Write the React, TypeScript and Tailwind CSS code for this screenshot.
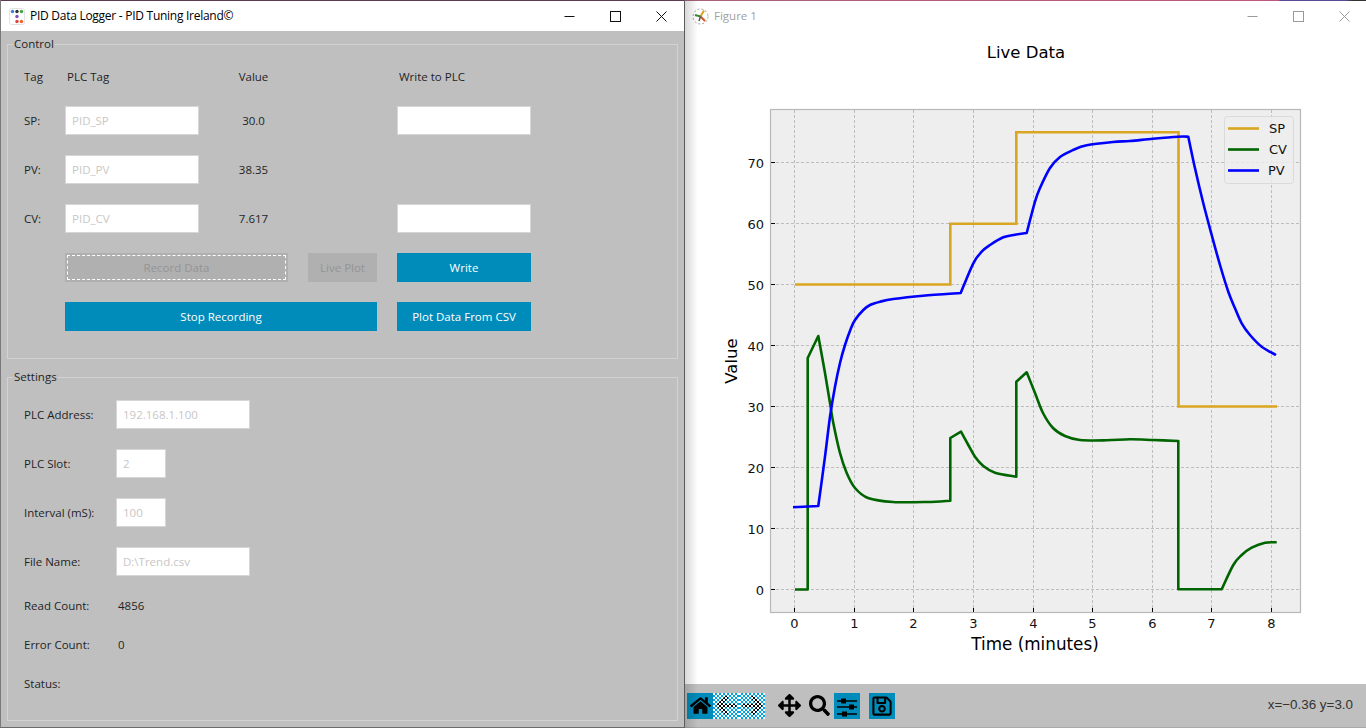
import React from 'react';
import { FaArrowLeft, FaArrowRight, FaArrowsAlt, FaHome, FaRegSave, FaSearch } from 'react-icons/fa';

type Pt = [number, number];

// Plot geometry, in page pixels (the svg viewBox uses the same numbers)
const xTicks = [0, 1, 2, 3, 4, 5, 6, 7, 8];
const yTicks = [0, 10, 20, 30, 40, 50, 60, 70];
const tx = (t: number) => Math.floor(794.6 + 59.6 * t) + 0.5;
const ty = (v: number) => Math.floor(589.3 - 6.09 * v) + 0.5;

const spPath = 'M795 284.5H950.3V223.7H1016.3V132.3H1178.5V406.5H1277';

const cvSections: Pt[][] = [
  [[795, 589.5], [807.7, 589.5], [807.7, 358], [818.3, 336]],
  [[818.3, 336], [825, 373], [830, 403], [833.3, 423], [840, 453], [846.7, 473], [855, 488], [868, 498], [893, 502], [927, 502], [950.3, 500.7]],
  [[950.3, 500.7], [950.3, 438], [961, 431.7]],
  [[961, 431.7], [968.3, 445], [975, 456.7], [983.3, 466], [995, 472.7], [1016.3, 476.7]],
  [[1016.3, 476.7], [1016.3, 381.7], [1026.7, 372.3]],
  [[1026.7, 372.3], [1035, 393], [1043, 413], [1053, 428], [1065, 436], [1080, 440], [1106.7, 440.3], [1130, 439.3], [1153, 440], [1178.3, 441]],
  [[1178.3, 441], [1178.3, 589.3], [1221.7, 589.3]],
  [[1221.7, 589.3], [1233.3, 565], [1241.7, 555], [1251.7, 547.7], [1265, 542.7], [1276.7, 542.3]],
];

const pvSections: Pt[][] = [
  [[793, 507.3], [818.3, 506]],
  [[818.3, 506], [825, 456.7], [830, 416.7], [835, 386.7], [840, 363], [845, 345], [850.7, 329], [855, 320], [863.3, 310], [870, 305], [880, 301.7], [893.3, 299], [923, 295.7], [960.7, 293]],
  [[960.7, 293], [973.3, 263.3], [981.7, 251.7], [990, 245], [1003.3, 237.3], [1015, 234.7], [1026.7, 233]],
  [[1026.7, 233], [1035, 201.7], [1040, 188], [1050, 168], [1060, 157], [1073, 150], [1086.7, 145.3], [1113, 142], [1130, 141], [1153, 138.7], [1178, 136.7], [1188.3, 136.7]],
  [[1188.3, 136.7], [1195, 168.3], [1203.3, 203.3], [1211.7, 235], [1220, 265], [1228.3, 291.7], [1235, 308.3], [1241.7, 323.3], [1250, 335], [1261.7, 346.7], [1276, 355]],
];

// Catmull-Rom through the samples; straight when a section has just two or three corner points
function toPath(sections: Pt[][]) {
  let d = '';
  sections.forEach((pts, si) => {
    if (si === 0) d += `M${pts[0][0]} ${pts[0][1]}`;
    if (pts.length <= 4) {
      pts.slice(1).forEach((p) => (d += `L${p[0]} ${p[1]}`));
      return;
    }
    for (let i = 0; i < pts.length - 1; i++) {
      const p0 = pts[Math.max(i - 1, 0)];
      const p1 = pts[i];
      const p2 = pts[i + 1];
      const p3 = pts[Math.min(i + 2, pts.length - 1)];
      const c1x = p1[0] + (p2[0] - p0[0]) / 6;
      const c1y = p1[1] + (p2[1] - p0[1]) / 6;
      const c2x = p2[0] - (p3[0] - p1[0]) / 6;
      const c2y = p2[1] - (p3[1] - p1[1]) / 6;
      d += `C${c1x} ${c1y} ${c2x} ${c2y} ${p2[0]} ${p2[1]}`;
    }
  });
  return d;
}

// white checker cells, 2px each, for a 26px square
const ditherPath = (() => {
  let d = '';
  for (let y = 0; y < 26; y += 2) {
    for (let x = 0; x < 26; x += 2) {
      if ((x + y) % 4 === 0) d += `M${x} ${y}h2v2h-2z`;
    }
  }
  return d;
})();

const WinControls: React.FC<{ dim?: boolean }> = ({ dim }) => {
  const stroke = dim ? '#9a9a9a' : '#111111';
  return (
    <div className="ml-auto flex h-full items-center">
      <div className="flex h-full w-[46px] items-center justify-center">
        <svg width="11" height="11" viewBox="0 0 11 11"><path d="M0.5 5.5H10.5" stroke={stroke} fill="none" /></svg>
      </div>
      <div className="flex h-full w-[46px] items-center justify-center">
        <svg width="11" height="11" viewBox="0 0 11 11"><rect x="0.5" y="0.5" width="10" height="10" stroke={stroke} fill="none" /></svg>
      </div>
      <div className="flex h-full w-[46px] items-center justify-center">
        <svg width="11" height="11" viewBox="0 0 11 11"><path d="M0.5 0.5L10.5 10.5M10.5 0.5L0.5 10.5" stroke={stroke} fill="none" /></svg>
      </div>
    </div>
  );
};

const Field: React.FC<{ value?: string; w?: string }> = ({ value = '', w = 'w-[134px]' }) => (
  <input
    readOnly
    value={value}
    className={`${w} h-[29px] shrink-0 border border-[#d6d6d6] bg-white px-[6px] text-[#c9c6c6] outline-none`}
  />
);

const Row: React.FC<{ children: React.ReactNode }> = ({ children }) => (
  <div className="flex h-[29px] items-center">{children}</div>
);

const ToolBtn: React.FC<{ children: React.ReactNode; className?: string }> = ({ children, className = '' }) => (
  <div className={`relative flex h-[26px] w-[26px] shrink-0 items-center justify-center text-black ${className}`}>{children}</div>
);

// white checker over a disabled toolbar button
const Dither: React.FC = () => (
  <svg className="absolute inset-0" width="26" height="26" viewBox="0 0 26 26" shapeRendering="crispEdges">
    <path d={ditherPath} fill="#ffffff" />
  </svg>
);

const SlidersIcon: React.FC = () => (
  <svg width="26" height="26" viewBox="0 0 26 26">
    <path d="M3 7.2h20v1.6H3zM3 13.2h20v1.6H3zM3 20.2h20v1.6H3z" fill="#000" />
    <path d="M7 5.5h5v5H7zM15 11.5h5v5h-5zM8 18.5h5v5H8z" fill="#000" />
  </svg>
);

const Figure: React.FC = () => (
  <svg className="block font-['DejaVu_Sans',sans-serif]" width="681" height="653" viewBox="685 31 681 653">
    <rect x="770.5" y="109.5" width="530" height="503" fill="#eeeeee" />
    {xTicks.map((t) => (
      <g key={t}>
        <line x1={tx(t)} x2={tx(t)} y1="110" y2="612" stroke="#bdbdbd" strokeDasharray="3 2" />
        <line x1={tx(t)} x2={tx(t)} y1="608" y2="612" stroke="#000" />
        <text x={tx(t)} y="628" textAnchor="middle" fontSize="13" fill="#111">{t}</text>
      </g>
    ))}
    {yTicks.map((v) => (
      <g key={v}>
        <line x1="771" x2="1300" y1={ty(v)} y2={ty(v)} stroke="#bdbdbd" strokeDasharray="3 2" />
        <line x1="771" x2="775" y1={ty(v)} y2={ty(v)} stroke="#000" />
        <text x="764" y={ty(v) + 5} textAnchor="end" fontSize="13" fill="#111">{v}</text>
      </g>
    ))}
    <rect x="770.5" y="109.5" width="530" height="503" fill="none" stroke="#b8b8b8" strokeWidth="1.2" />
    <path d={spPath} fill="none" stroke="#daa520" strokeWidth="2.6" strokeLinejoin="miter" />
    <path d={toPath(cvSections)} fill="none" stroke="#006400" strokeWidth="2.6" strokeLinejoin="round" />
    <path d={toPath(pvSections)} fill="none" stroke="#0000ff" strokeWidth="2.6" strokeLinejoin="round" />

    <rect x="1224.5" y="116.5" width="69" height="67" rx="3" fill="#eeeeee" fillOpacity="0.8" stroke="#dadada" />
    <line x1="1228" x2="1259" y1="128.5" y2="128.5" stroke="#daa520" strokeWidth="2.6" />
    <line x1="1228" x2="1259" y1="149.5" y2="149.5" stroke="#006400" strokeWidth="2.6" />
    <line x1="1228" x2="1259" y1="170.5" y2="170.5" stroke="#0000ff" strokeWidth="2.6" />
    <text x="1269" y="133" fontSize="13" fill="#111">SP</text>
    <text x="1269" y="154" fontSize="13" fill="#111">CV</text>
    <text x="1268" y="175" fontSize="13" fill="#111">PV</text>

    <text x="1026" y="58" textAnchor="middle" fontSize="16.5" fill="#000">Live Data</text>
    <text x="1035" y="650" textAnchor="middle" fontSize="16.8" fill="#000">Time (minutes)</text>
    <text transform="translate(737 361) rotate(-90)" textAnchor="middle" fontSize="16.5" fill="#000">Value</text>
  </svg>
);

const App: React.FC = () => {
  return (
    <div className="flex h-[728px] w-[1366px] overflow-hidden bg-white font-['Open_Sans',sans-serif] text-[11.5px] text-[#1f1f1f]">
      {/* Logger window */}
      <div className="flex h-full w-[685px] shrink-0 flex-col border-r border-b border-l border-r-[#5c5c5c] border-b-[#6a6a6a] border-l-[#7a7a7a]">
        <div className="h-px shrink-0 bg-[#5e3a52]" />
        <div className="flex h-[30px] shrink-0 items-center bg-white">
          <svg className="ml-[8px] mr-[5px]" width="16" height="17" viewBox="0 0 16 17">
            <rect x="0.5" y="0.5" width="15" height="16" rx="2" fill="#fff" stroke="#e2e2e2" />
            <circle cx="3.5" cy="3.5" r="1.7" fill="#3f7fd0" />
            <circle cx="8" cy="3.5" r="1.7" fill="#333" />
            <circle cx="12.5" cy="3.5" r="1.7" fill="#3fa53f" />
            <circle cx="8" cy="8.5" r="1.7" fill="#8a4fb5" />
            <circle cx="8" cy="13.5" r="1.7" fill="#e0443c" />
            <circle cx="12.5" cy="13.5" r="1.7" fill="#f0602c" />
          </svg>
          <span className="whitespace-nowrap text-[12px] tracking-[-0.27px] text-black">PID Data Logger - PID Tuning Ireland©</span>
          <WinControls />
        </div>

        <div className="flex-1 bg-[#bfbfbf] px-[6px] pt-[13px]">
          {/* Control */}
          <div className="relative h-[315px] border border-[#d2d2d2] px-[16px] pt-[23px]">
            <span className="absolute -top-[10px] left-[5px] bg-[#bfbfbf] px-px leading-[18px]">Control</span>
            <div className="flex flex-col gap-[20px]">
              <div className="flex h-[18px] items-center">
                <span className="w-[41px]">Tag</span>
                <span className="w-[134px] pl-[2px]">PLC Tag</span>
                <span className="w-[109px] text-center">Value</span>
                <span className="w-[89px]" />
                <span className="pl-[2px]">Write to PLC</span>
              </div>
              <Row>
                <span className="w-[41px]">SP:</span>
                <Field value="PID_SP" />
                <span className="w-[109px] text-center">30.0</span>
                <span className="w-[89px]" />
                <Field />
              </Row>
              <Row>
                <span className="w-[41px]">PV:</span>
                <Field value="PID_PV" />
                <span className="w-[109px] text-center">38.35</span>
              </Row>
              <Row>
                <span className="w-[41px]">CV:</span>
                <Field value="PID_CV" />
                <span className="w-[109px] text-center">7.617</span>
                <span className="w-[89px]" />
                <Field />
              </Row>
              <Row>
                <span className="w-[41px]" />
                <button className="flex h-full w-[223px] items-center justify-center bg-[#b0b0b0] text-[#949494] outline-1 -outline-offset-3 outline-white outline-dashed">
                  Record Data
                </button>
                <button className="ml-[20px] flex h-full w-[69px] items-center justify-center bg-[#b0b0b0] text-[#949494]">
                  Live Plot
                </button>
                <button className="ml-[20px] flex h-full w-[134px] items-center justify-center bg-[#008cba] text-white">
                  Write
                </button>
              </Row>
              <Row>
                <span className="w-[41px]" />
                <button className="flex h-full w-[312px] items-center justify-center bg-[#008cba] text-white">
                  Stop Recording
                </button>
                <button className="ml-[20px] flex h-full w-[134px] items-center justify-center bg-[#008cba] text-white">
                  Plot Data From CSV
                </button>
              </Row>
            </div>
          </div>

          {/* Settings */}
          <div className="relative mt-[18px] h-[344px] border border-[#d2d2d2] px-[16px] pt-[22px]">
            <span className="absolute -top-[10px] left-[5px] bg-[#bfbfbf] px-px leading-[18px]">Settings</span>
            <div className="flex flex-col gap-[20px]">
              <Row>
                <span className="w-[92px]">PLC Address:</span>
                <Field value="192.168.1.100" />
              </Row>
              <Row>
                <span className="w-[92px]">PLC Slot:</span>
                <Field value="2" w="w-[50px]" />
              </Row>
              <Row>
                <span className="w-[92px]">Interval (mS):</span>
                <Field value="100" w="w-[50px]" />
              </Row>
              <Row>
                <span className="w-[92px]">File Name:</span>
                <Field value="D:\Trend.csv" />
              </Row>
              <div className="flex h-[19px] items-center">
                <span className="w-[92px]">Read Count:</span>
                <span className="pl-[2px]">4856</span>
              </div>
              <div className="flex h-[19px] items-center">
                <span className="w-[92px]">Error Count:</span>
                <span className="pl-[2px]">0</span>
              </div>
              <div className="flex h-[19px] items-center">
                <span className="w-[92px]">Status:</span>
              </div>
            </div>
          </div>
        </div>
      </div>

      {/* Figure window */}
      <div className="relative flex h-full w-[681px] shrink-0 flex-col">
        <div className="h-px shrink-0 bg-[linear-gradient(90deg,#a8607c_0%,#c0587e_87%,#5b4a9a_87.5%,#5b4a9a_97%,#333_98%)]" />
        <div className="flex h-[30px] shrink-0 items-center bg-white">
          <svg className="ml-[7px] mr-[5px]" width="17" height="17" viewBox="0 0 17 17">
            <circle cx="8.5" cy="8.5" r="7.5" fill="none" stroke="#888" strokeWidth="0.8" strokeDasharray="2 2" />
            <path d="M8.5 8.5L12 2.5" stroke="#e0a020" strokeWidth="2" />
            <path d="M8.5 8.5L3 7" stroke="#3a8a3a" strokeWidth="2" />
            <path d="M8.5 8.5L13 13" stroke="#d9531e" strokeWidth="2" />
            <path d="M8.5 8.5L7 13" stroke="#555" strokeWidth="1.5" />
          </svg>
          <span className="text-[11.5px] text-[#a0a0a0]">Figure 1</span>
          <div className="-mr-[1px] ml-auto flex h-full">
            <WinControls dim />
          </div>
        </div>
        <div className="flex-1 bg-white">
          <Figure />
        </div>
        <div className="flex h-[44px] shrink-0 items-center border-b border-b-[#a8a8a8] bg-[#bfbfbf] pl-[2px] pr-[13px]">
          <ToolBtn className="bg-[#008cba]"><FaHome size={21} /></ToolBtn>
          <ToolBtn className="bg-[#00a5e0]"><FaArrowLeft size={23} /><Dither /></ToolBtn>
          <ToolBtn className="bg-[#00a5e0]"><FaArrowRight size={23} /><Dither /></ToolBtn>
          <ToolBtn className="ml-[11px]"><FaArrowsAlt size={23} /></ToolBtn>
          <ToolBtn className="ml-[4px]"><FaSearch size={21} /></ToolBtn>
          <ToolBtn className="ml-[2px] bg-[#008cba]"><SlidersIcon /></ToolBtn>
          <ToolBtn className="ml-[9px] bg-[#008cba]"><FaRegSave size={22} /></ToolBtn>
          <span className="ml-auto font-['Liberation_Sans',sans-serif] text-[13.4px] text-[#333]">x=−0.36 y=3.0</span>
        </div>
        {/* shadow thrown by the logger window */}
        <div className="pointer-events-none absolute inset-y-0 left-0 w-[13px] bg-gradient-to-r from-[#00000026] to-transparent" />
      </div>
    </div>
  );
};

export default App;
